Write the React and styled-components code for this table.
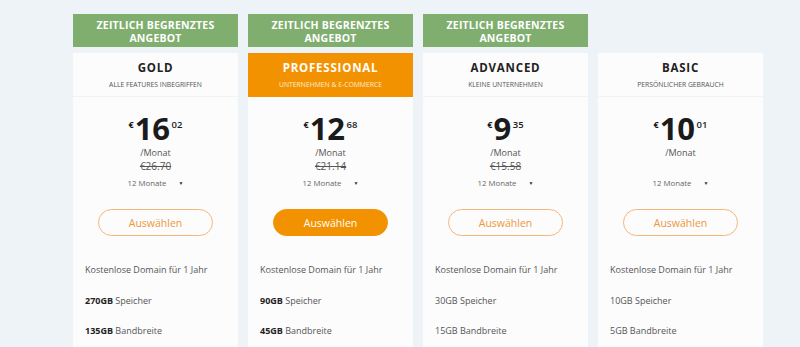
import React from 'react';
import styled, { createGlobalStyle } from 'styled-components';

const Global = createGlobalStyle`
  html, body { margin: 0; padding: 0; }
  body {
    background: #edf3f7;
    font-family: "Open Sans", "Liberation Sans", sans-serif;
    overflow: hidden;
  }
`

const Page = styled.div`
  display: flex;
  align-items: flex-start;
  gap: 10px;
  padding: 14px 0 0 73px;
  height: 347px;
  box-sizing: border-box;
`

const Column = styled.div`
  width: 165px;
  display: flex;
  flex-direction: column;
  gap: 6px;
`

const Banner = styled.div`
  flex-shrink: 0;
  height: 33px;
  box-sizing: border-box;
  padding-top: 5px;
  background: ${p => p.$empty ? 'transparent' : '#80ae6f'};
  color: #fff;
  font-size: 10.5px;
  font-weight: 700;
  line-height: 12.5px;
  text-align: center;
  letter-spacing: 0.2px;
`

const Card = styled.div`
  background: #fcfcfc;
  height: 320px;
`

const Head = styled.div`
  height: 44px;
  box-sizing: border-box;
  padding-top: 8px;
  text-align: center;
  background: ${p => p.$featured ? '#f39200' : 'transparent'};
  border-bottom: 1px solid ${p => p.$featured ? '#f39200' : '#f1f3f5'};
`

const Title = styled.div`
  font-size: 11.5px;
  font-weight: 700;
  letter-spacing: 0.8px;
  line-height: 14px;
  color: ${p => p.$featured ? '#fff' : '#222'};
`

const Sub = styled.div`
  margin-top: 5px;
  font-size: 6.8px;
  line-height: 10px;
  text-transform: uppercase;
  color: ${p => p.$featured ? '#fdebd3' : '#555'};
`

const PriceBlock = styled.div`
  display: flex;
  flex-direction: column;
  align-items: center;
  padding-top: 15px;
  height: 112px;
  box-sizing: border-box;
`

const PriceRow = styled.div`
  display: flex;
  align-items: flex-start;
  color: #1b1b1b;
  font-weight: 700;
`

const Currency = styled.span`
  font-size: 9px;
  line-height: 9px;
  margin-top: 8px;
  margin-right: 1px;
`

const Whole = styled.span`
  font-size: 31px;
  line-height: 32px;
  letter-spacing: -0.3px;
`

const Cents = styled.span`
  font-size: 9.5px;
  line-height: 9px;
  margin-top: 8px;
  margin-left: 2px;
  font-weight: 600;
`

const Per = styled.div`
  margin-top: 2px;
  font-size: 9px;
  line-height: 13px;
  color: #555;
`

const Old = styled.div`
  font-size: 10px;
  line-height: 14px;
  color: #555;
  text-decoration: line-through;
  height: 14px;
`

const Term = styled.div`
  margin-top: 4px;
  display: flex;
  align-items: center;
  gap: 12px;
  font-size: 7.8px;
  line-height: 12px;
  color: #666;
  &::after {
    content: '▼';
    font-size: 5px;
    color: #333;
  }
`

const Choose = styled.button`
  display: block;
  margin: 0 auto;
  width: 115px;
  height: 27px;
  border-radius: 14px;
  border: 1px solid ${p => p.$filled ? '#f39200' : '#f5b778'};
  background: ${p => p.$filled ? '#f39200' : 'transparent'};
  color: ${p => p.$filled ? '#fff' : '#f0973a'};
  font-family: inherit;
  font-size: 10.5px;
  padding: 0;
`

const Features = styled.ul`
  list-style: none;
  margin: 0;
  padding: 27px 0 0 12px;
  display: flex;
  flex-direction: column;
  gap: 17.5px;
`

const Feature = styled.li`
  font-size: 9px;
  line-height: 13px;
  color: #555;
  b { color: #222; font-weight: 700; }
`

const plans = [
  { name: 'GOLD', sub: 'Alle Features inbegriffen', whole: '16', cents: '02', old: '€26.70', offer: true, storage: '270GB', bw: '135GB', bold: true },
  { name: 'PROFESSIONAL', sub: 'Unternehmen & E-Commerce', whole: '12', cents: '68', old: '€21.14', offer: true, featured: true, storage: '90GB', bw: '45GB', bold: true },
  { name: 'ADVANCED', sub: 'Kleine Unternehmen', whole: '9', cents: '35', old: '€15.58', offer: true, storage: '30GB', bw: '15GB' },
  { name: 'BASIC', sub: 'Persönlicher Gebrauch', whole: '10', cents: '01', old: '', storage: '10GB', bw: '5GB' },
]

function Plan({ p }) {
  return (
    <Column>
      <Banner $empty={!p.offer}>
        {p.offer && <>ZEITLICH BEGRENZTES<br />ANGEBOT</>}
      </Banner>
      <Card>
        <Head $featured={p.featured}>
          <Title $featured={p.featured}>{p.name}</Title>
          <Sub $featured={p.featured}>{p.sub}</Sub>
        </Head>
        <PriceBlock>
          <PriceRow>
            <Currency>€</Currency>
            <Whole>{p.whole}</Whole>
            <Cents>{p.cents}</Cents>
          </PriceRow>
          <Per>/Monat</Per>
          <Old>{p.old}</Old>
          <Term>12 Monate</Term>
        </PriceBlock>
        <Choose $filled={p.featured}>Auswählen</Choose>
        <Features>
          <Feature>Kostenlose Domain für 1 Jahr</Feature>
          <Feature>{p.bold ? <b>{p.storage}</b> : p.storage} Speicher</Feature>
          <Feature>{p.bold ? <b>{p.bw}</b> : p.bw} Bandbreite</Feature>
        </Features>
      </Card>
    </Column>
  )
}

export default function App() {
  return (
    <>
      <Global />
      <Page>
        {plans.map((p, i) => <Plan key={i} p={p} />)}
      </Page>
    </>
  )
}
